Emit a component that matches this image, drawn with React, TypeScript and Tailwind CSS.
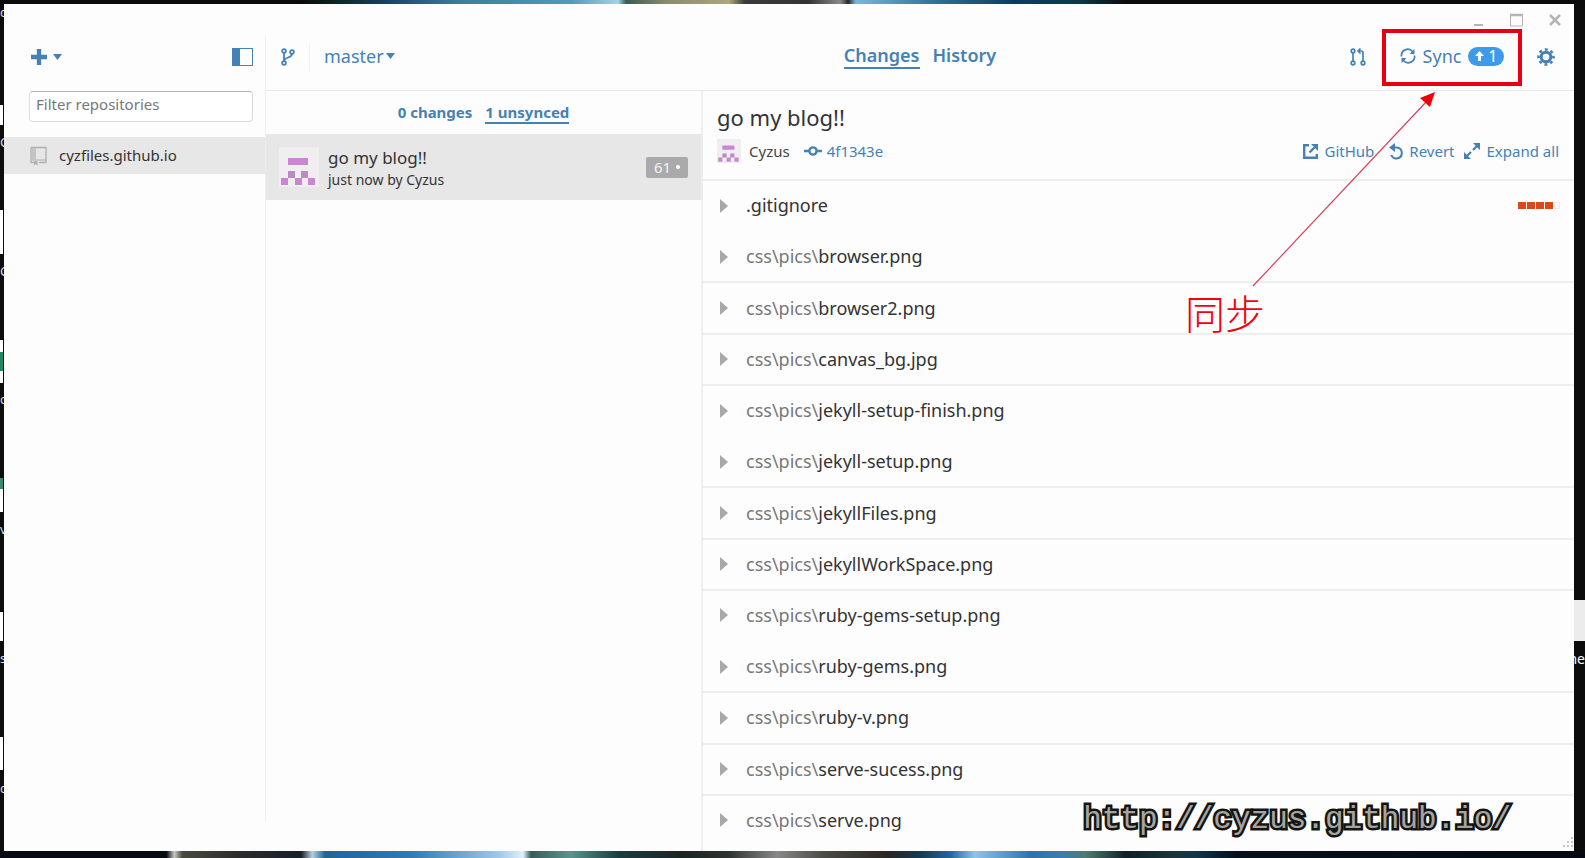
import React from "react";

const BLUE = "text-[#4581b5]";

const files: { dir: string; name: string; line: boolean }[] = [
  { dir: "", name: ".gitignore", line: false },
  { dir: "css\\pics\\", name: "browser.png", line: true },
  { dir: "css\\pics\\", name: "browser2.png", line: true },
  { dir: "css\\pics\\", name: "canvas_bg.jpg", line: true },
  { dir: "css\\pics\\", name: "jekyll-setup-finish.png", line: false },
  { dir: "css\\pics\\", name: "jekyll-setup.png", line: true },
  { dir: "css\\pics\\", name: "jekyllFiles.png", line: true },
  { dir: "css\\pics\\", name: "jekyllWorkSpace.png", line: true },
  { dir: "css\\pics\\", name: "ruby-gems-setup.png", line: false },
  { dir: "css\\pics\\", name: "ruby-gems.png", line: true },
  { dir: "css\\pics\\", name: "ruby-v.png", line: true },
  { dir: "css\\pics\\", name: "serve-sucess.png", line: true },
  { dir: "css\\pics\\", name: "serve.png", line: false },
];

function Identicon({ className }: { className: string }) {
  return (
    <svg viewBox="0 0 40 40" className={className} aria-hidden="true">
      <rect width="40" height="40" fill="#f0eef0" />
      <g fill="#cb86d2">
        <path d="M9 11h20v7H9zM2 31h7v7H2zM16 31h7v7h-7zM29 31h7v7h-7z" />
        <path d="M9 24h7v7H9zM22 24h7v7h-7z" fill="#b98cc0" />
      </g>
    </svg>
  );
}

function Caret() {
  return (
    <svg viewBox="0 0 9 6" className="h-[6px] w-[9px]" fill="currentColor" aria-hidden="true">
      <path d="M0 0h9L4.500 6z" />
    </svg>
  );
}

function Sidebar() {
  return (
    <aside className="flex w-[261px] shrink-0 flex-col">
      <div className={`flex h-[86px] items-center justify-between pl-[27px] pr-3 pt-5 ${BLUE}`}>
        <button aria-label="Add repository" className="flex items-center gap-[6px]">
          <svg viewBox="0 0 17 17" className="size-4" fill="currentColor" aria-hidden="true">
            <path d="M6.200 0h4.600v6.200H17v4.600h-6.200V17H6.200v-6.200H0V6.200h6.200z" />
          </svg>
          <Caret />
        </button>
        <button aria-label="Toggle sidebar">
          <svg viewBox="0 0 21 18" className="h-[18px] w-[21px]" aria-hidden="true">
            <rect x="0.500" y="0.500" width="20" height="17" fill="#fff" stroke="currentColor" />
            <path d="M0 0h8v18H0z" fill="currentColor" />
          </svg>
        </button>
      </div>
      <div className="pl-[25px] pr-3 pt-[1px]">
        <input
          aria-label="Filter repositories"
          placeholder="Filter repositories"
          className="block h-[31px] w-full rounded-sm border border-[#dcdcdc] border-t-[#b4b4b4] bg-white px-[6px] pb-[6px] text-[15px] text-gray-700 outline-none placeholder:text-[#777]"
        />
      </div>
      <a href="#repo" className="mt-[15px] flex h-[37px] items-center gap-[12px] bg-[#e7e7e7] pl-[26px] text-[15px] text-[#333]">
        <svg viewBox="0 0 17 20" className="h-5 w-[17px]" fill="none" stroke="#b0b0b0" aria-hidden="true">
          <path d="M1 1.500h15v15H9M4 16.500H1v-15" strokeWidth="1.300" />
          <path d="M1 14h15" />
          <path d="M2 2h4v12H2z" fill="#c4c4c4" stroke="none" />
          <path d="M4 15v4.500l1.700-1.500 1.800 1.500V15z" fill="#b0b0b0" stroke="none" />
        </svg>
        cyzfiles.github.io
      </a>
    </aside>
  );
}

function Header() {
  return (
    <header className={`flex h-[87px] shrink-0 items-center border-b border-[#e8e8e8] pt-5 ${BLUE}`}>
      <div className="flex flex-1 items-center pl-[15px]">
        <button aria-label="Create branch">
          <svg viewBox="0 0 14 18" className="h-[18px] w-[14px]" fill="none" stroke="currentColor" strokeWidth="1.800" aria-hidden="true">
            <circle cx="3" cy="3" r="1.900" />
            <circle cx="3" cy="15" r="1.900" />
            <circle cx="11" cy="4" r="1.900" />
            <path d="M3 5v8M11 6C11 10 3.500 9 3 13" />
          </svg>
        </button>
        <span className="ml-[14px] h-7 w-px bg-[#f0f0f0]" />
        <button className="ml-[14px] flex items-center gap-[2px] pb-[2px] text-[18px] leading-6">
          master <Caret />
        </button>
      </div>
      <nav className="flex gap-[13px] pb-[2px] pl-1 text-[18px] leading-[24px] font-semibold">
        <a href="#changes" className="border-b-2 border-[#4581b5]">Changes</a>
        <a href="#history">History</a>
      </nav>
      <div className="flex flex-1 items-center justify-end pr-[19px]">
        <button aria-label="Pull request">
          <svg viewBox="0 0 16 18" className="h-[18px] w-4" fill="none" stroke="currentColor" strokeWidth="1.700" aria-hidden="true">
            <circle cx="3" cy="3" r="1.800" />
            <circle cx="3" cy="15" r="1.800" />
            <circle cx="13" cy="15" r="1.800" />
            <path d="M3 5v8M13 13V5q0-2-2-2H8M10.500.5 8 3l2.500 2.500" />
          </svg>
        </button>
        <button className="-my-4 ml-[16px] flex h-[57px] w-[140px] items-center justify-center gap-[7px] border-4 border-[#e60012] pb-[2px] text-[18px]">
          <svg viewBox="0 0 16 16" className="size-4" fill="none" stroke="currentColor" strokeWidth="1.700" aria-hidden="true">
            <path d="M1.500 8.500A6.300 6.300 0 0 1 12.500 3.500M14.500 7.500A6.300 6.300 0 0 1 3.500 12.500" />
            <path d="M14.500 1v5h-5zM1.500 15v-5h5z" fill="currentColor" stroke="none" />
          </svg>
          Sync
          <span className="flex h-[19px] w-9 items-center justify-center gap-1 rounded-full bg-[#3d9be9] text-[16px] leading-[19px] text-white">
            <svg viewBox="0 0 9 10" className="h-[10px] w-[9px]" fill="currentColor" aria-hidden="true">
              <path d="M4.500 0 9 5H6v5H3V5H0z" />
            </svg>
            1
          </span>
        </button>
        <button aria-label="Settings" className="ml-[15px]">
          <svg viewBox="0 0 18 18" className="size-[18px]" fill="none" stroke="currentColor" aria-hidden="true">
            <circle cx="9" cy="9" r="4.800" strokeWidth="3" />
            <circle cx="9" cy="9" r="7.500" strokeWidth="2.600" strokeDasharray="2.900 2.990" strokeDashoffset="1.450" />
          </svg>
        </button>
      </div>
    </header>
  );
}

function Commits() {
  return (
    <section className="flex w-[437px] shrink-0 flex-col border-r-2 border-[#eeeeee]">
      <nav className={`flex h-[43px] items-start justify-center gap-[13px] pt-[11px] text-[15px] leading-[20px] font-bold ${BLUE}`}>
        <a href="#local">0 changes</a>
        <a href="#unsynced" className="border-b-2 border-[#4581b5]">1 unsynced</a>
      </nav>
      <a href="#commit" className="flex h-[66px] items-center bg-[#e7e7e7] pl-[13px] pr-[13px] text-[#333]">
        <Identicon className="size-10" />
        <span className="ml-[9px] flex flex-1 flex-col pt-[2px]">
          <span className="text-[17px] leading-[22px]">go my blog!!</span>
          <span className="text-[14px] leading-[21px]">just now by Cyzus</span>
        </span>
        <span className="flex h-[21px] w-[42px] items-center justify-center gap-[5px] rounded-xs bg-[#aaa] text-[15px] text-[#f4f4f4]">
          61
          <span className="size-1 rounded-full bg-white" />
        </span>
      </a>
    </section>
  );
}

function Detail() {
  return (
    <main className="flex min-w-0 flex-1 flex-col pb-1">
      <div className="h-[90px] shrink-0 border-b-2 border-[#eeeeee] pl-[14px] pr-[15px] pt-[11px]">
        <h1 className="text-[22px] leading-[30px] text-[#333]">go my blog!!</h1>
        <div className={`mt-[7px] flex items-center text-[15px] leading-6 ${BLUE}`}>
          <Identicon className="size-6" />
          <span className="ml-[8px] text-[#444]">Cyzus</span>
          <a href="#sha" className="ml-[14px] flex items-center gap-[5px]">
            <svg viewBox="0 0 18 10" className="h-[10px] w-[18px]" fill="none" stroke="currentColor" strokeWidth="2.400" aria-hidden="true">
              <circle cx="9" cy="5" r="3.600" />
              <path d="M0 5h5M13 5h5" />
            </svg>
            4f1343e
          </a>
          <span className="flex-1" />
          <a href="#github" className="flex items-center gap-[7px]">
            <svg viewBox="0 0 15 15" className="size-[15px]" fill="none" stroke="currentColor" strokeWidth="2.400" aria-hidden="true">
              <path d="M6 1.200H1.200v12.600h12.600V10M6.500 8.500l5-5" />
              <path d="M8 0h7v7z" fill="currentColor" stroke="none" />
            </svg>
            GitHub
          </a>
          <button className="ml-[15px] flex items-center gap-[5px]">
            <svg viewBox="0 0 15 17" className="h-[17px] w-[15px]" fill="none" stroke="currentColor" strokeWidth="2" aria-hidden="true">
              <path d="M4 4.500h4a5.500 5.500 0 1 1-5.800 7.500" />
              <path d="M0 4.500 6 0v9z" fill="currentColor" stroke="none" />
            </svg>
            Revert
          </button>
          <button className="ml-[9px] flex items-center gap-[7px]">
            <svg viewBox="0 0 16 16" className="size-4" fill="currentColor" aria-hidden="true">
              <path d="M9 0h7v7zM0 9l7 7H0z" />
              <path d="M13 3 9 7M3 13l4-4" stroke="currentColor" strokeWidth="2.200" />
            </svg>
            Expand all
          </button>
        </div>
      </div>
      <ul className="flex flex-1 flex-col">
        {files.map((f, i) => (
          <li key={f.name} className={`flex flex-1 border-b-2 ${f.line ? "border-[#eeeeee]" : "border-transparent"}`}>
            <button className="flex flex-1 items-center pl-[17px] pr-[14px] text-[18px] text-[#333]">
              <svg viewBox="0 0 8 14" className="mr-[18px] h-[14px] w-2" fill="#a8a8a8" aria-hidden="true">
                <path d="M0 0l8 7-8 7z" />
              </svg>
              <span className="text-[#777]">{f.dir}</span>
              {f.name}
              {i === 0 && (
                <span className="ml-auto flex gap-px">
                  <span className="h-[7px] w-2 bg-[#d9481e]" />
                  <span className="h-[7px] w-2 bg-[#d9481e]" />
                  <span className="h-[7px] w-2 bg-[#d9481e]" />
                  <span className="h-[7px] w-2 bg-[#d9481e]" />
                  <span className="h-[7px] w-[6px] border border-[#eee]" />
                </span>
              )}
            </button>
          </li>
        ))}
      </ul>
    </main>
  );
}

function WindowControls() {
  return (
    <div className="absolute top-[9px] right-[12px] flex items-center gap-[25px] text-[#b5b5b5]">
      <button aria-label="Minimize">
        <svg viewBox="0 0 12 14" className="h-[14px] w-3" aria-hidden="true">
          <path d="M1 11h9v2H1z" fill="currentColor" />
        </svg>
      </button>
      <button aria-label="Maximize">
        <svg viewBox="0 0 13 14" className="h-[14px] w-[13px]" fill="none" stroke="currentColor" aria-hidden="true">
          <path d="M.5 1v12h12V1" />
          <path d="M0 2h13" strokeWidth="2.500" />
        </svg>
      </button>
      <button aria-label="Close">
        <svg viewBox="0 0 14 14" className="size-[14px]" stroke="currentColor" strokeWidth="2.600" aria-hidden="true">
          <path d="M2 2l10 10M12 2 2 12" />
        </svg>
      </button>
    </div>
  );
}

function Desktop() {
  return (
    <div className="absolute inset-0 overflow-hidden bg-[#0c0c0c]" aria-hidden="true">
      <div className="absolute inset-x-0 top-0 h-2 bg-[linear-gradient(90deg,#0b0b0b_19%,#0a2420_21%,#173d5c_24%,#3a7f9f_29%,#4f9cb4_36%,#a8d0e8_39%,#3c5a50_39.500%,#8a8a70_42%,#aaa87c_46%,#3a3a3a_47%,#333_51%,#8a8a8a_53%,#555_53.300%,#222_53.500%,#7ab8da_54%,#2c7299_59%,#103a5c_64%,#0e3a4c_68%,#0b0b0b_71%)]" />
      <div className="absolute inset-x-0 bottom-0 h-2 bg-[linear-gradient(90deg,#060a12_10.500%,#c8c8c0_11%,#4a4a44_11.500%,#2c2c2c_15%,#1a2028_19%,#b8d0e0_19.700%,#1f659a_20.500%,#2c7cb8_26%,#a0c8ea_31.500%,#e0f0fa_33%,#3a5a58_33.500%,#57968c_36%,#1c3c40_39%,#1c2424_43%,#2e3330_46%,#888_49%,#4a4a46_52%,#2a2622_56%,#17384e_58%,#2068a4_60%,#8cc4f0_61.500%,#2c74b0_65%,#3a7cae_67%,#4d7c70_68.500%,#102028_71%,#1c3438_74%,#12344c_75.500%,#06101c_78%,#050910_100%)]" />
      <div className="absolute top-[105px] left-0 h-5 w-[3px] bg-white" />
      <div className="absolute top-[210px] left-0 h-11 w-[3px] bg-white" />
      <div className="absolute top-[340px] left-0 h-[43px] w-[3px] border-y-[12px] border-white bg-[#1f8a62]" />
      <div className="absolute top-[478px] left-0 h-[34px] w-[3px] border-t-[11px] border-[#3a8a6c] bg-white" />
      <div className="absolute top-[612px] left-0 h-[29px] w-[3px] bg-white" />
      <div className="absolute top-[737px] left-0 h-[33px] w-[3px] bg-white" />
      <div className="absolute top-1 left-0 w-1 overflow-hidden text-[13px] leading-[16px] text-[#ddd]">c</div>
      <div className="absolute top-[134px] left-0 w-1 overflow-hidden text-[13px] leading-[16px] text-[#ddd]">C</div>
      <div className="absolute top-[263px] left-0 w-1 overflow-hidden text-[13px] leading-[16px] text-[#ddd]">C</div>
      <div className="absolute top-[391px] left-0 w-1 overflow-hidden text-[13px] leading-[16px] text-[#ddd]">c</div>
      <div className="absolute top-[521px] left-0 w-1 overflow-hidden text-[13px] leading-[16px] text-[#ddd]">v</div>
      <div className="absolute top-[650px] left-0 w-1 overflow-hidden text-[13px] leading-[16px] text-[#ddd]">s</div>
      <div className="absolute top-[780px] left-0 w-1 overflow-hidden text-[13px] leading-[16px] text-[#ddd]">c</div>
      <div className="absolute top-[600px] right-0 h-[41px] w-[11px] bg-[#ececec]" />
      <div className="absolute top-[650px] right-0 text-[14px] leading-[17px] text-white">he</div>
    </div>
  );
}

function Annotations() {
  return (
    <>
      <svg viewBox="0 0 200 200" className="pointer-events-none absolute top-[88px] right-[145px] size-[200px]" aria-hidden="true">
        <path d="M13 198 187 13" stroke="#d8405c" strokeWidth="1.200" fill="none" />
        <path d="M195 4 180 10l10 9z" fill="#f00008" />
      </svg>
      <p className="pointer-events-none absolute top-[285px] right-[320px] font-['Noto_Sans_CJK_SC',sans-serif] text-[40px] leading-[54px] font-light text-[#f5000c]">
        同步
      </p>
      <p className="pointer-events-none absolute right-[74px] bottom-[20px] font-['Liberation_Mono',monospace] text-[31px] leading-[36px] text-[#a5a5a0] [-webkit-text-stroke:5px_#141414] [paint-order:stroke_fill]">
        http://cyzus.github.io/
      </p>
    </>
  );
}

export default function App() {
  return (
    <div className="relative flex h-screen flex-col overflow-hidden pt-1 pr-[11px] pb-[7px] pl-1 font-['Noto_Sans','Noto_Sans_CJK_SC',sans-serif]">
      <Desktop />
      <div className="relative flex min-h-0 flex-1 bg-[#fdfdfd]">
        <Sidebar />
        <div className="mb-[30px] mt-8 w-px bg-[#eeeeee]" />
        <div className="flex min-w-0 flex-1 flex-col">
          <Header />
          <div className="flex min-h-0 flex-1">
            <Commits />
            <Detail />
          </div>
        </div>
        <WindowControls />
        <svg viewBox="0 0 12 12" className="absolute right-0 bottom-[2px] size-3" fill="#c4c4c4" aria-hidden="true">
          <path d="M9 0h2v2H9zM9 4h2v2H9zM5 4h2v2H5zM9 8h2v2H9zM5 8h2v2H5zM1 8h2v2H1z" />
        </svg>
      </div>
      <Annotations />
    </div>
  );
}
